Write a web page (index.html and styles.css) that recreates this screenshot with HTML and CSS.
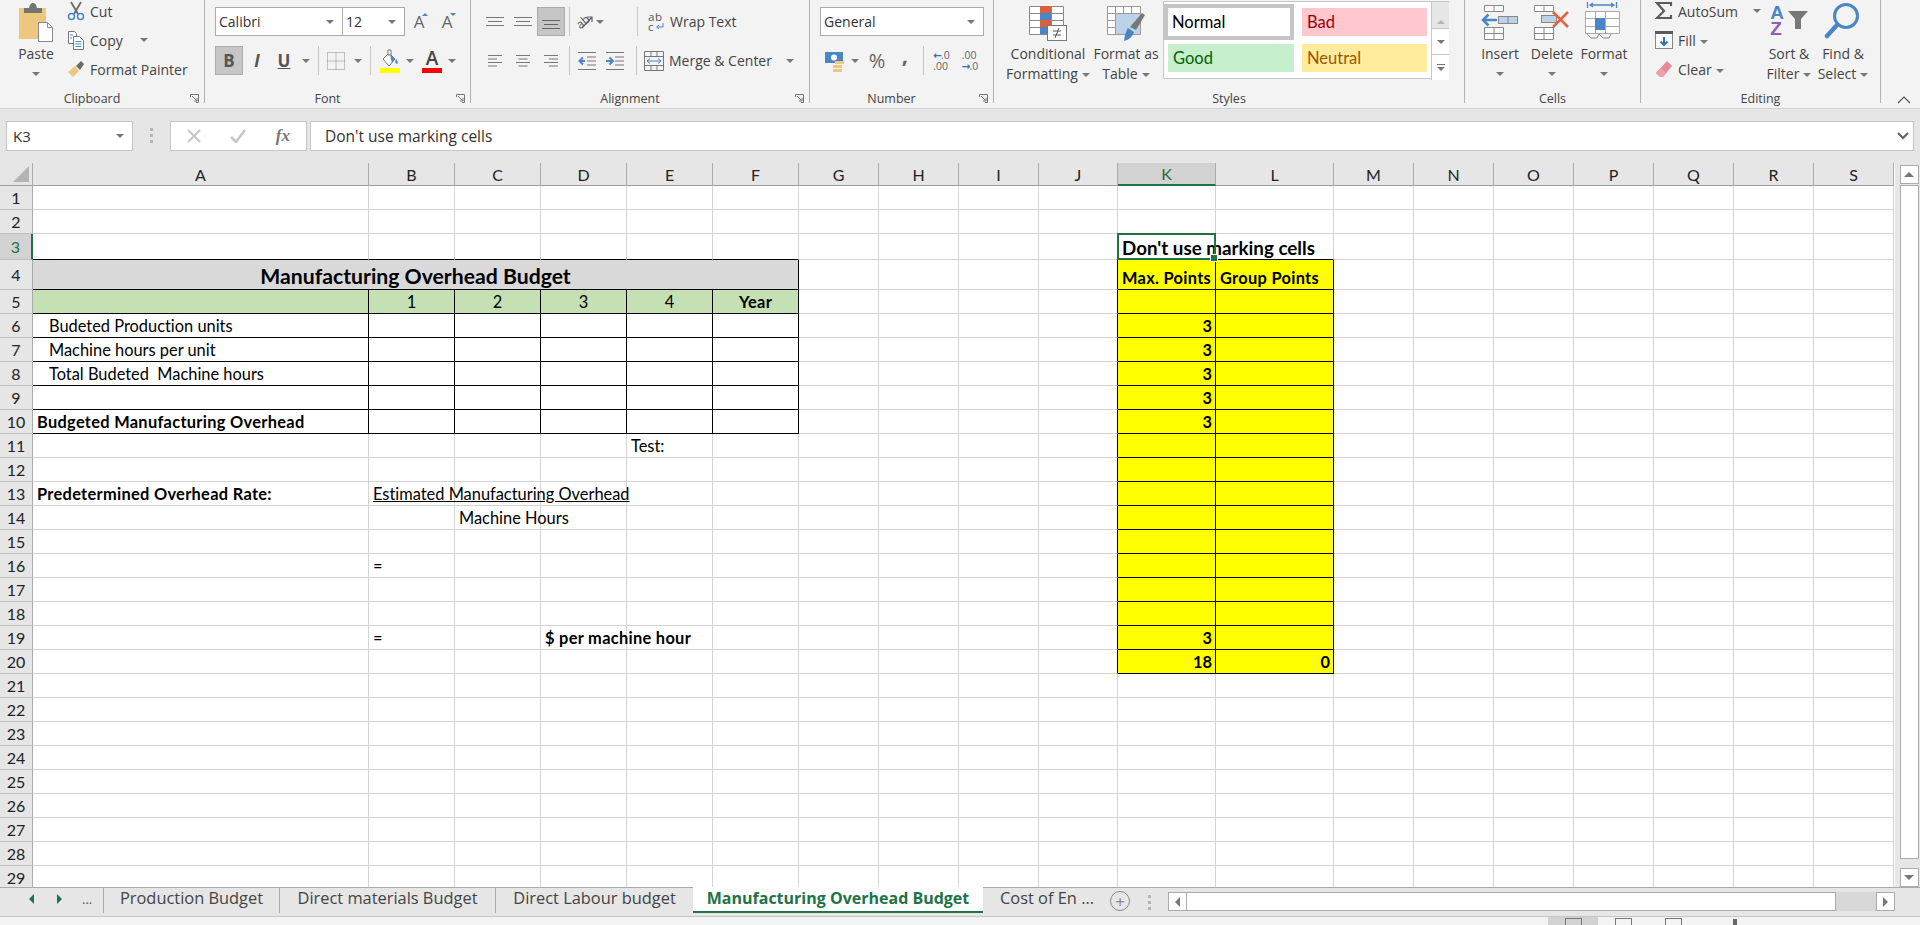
FILE: index.html
```html
<!DOCTYPE html>
<html lang="en">
<head>
    <meta charset="UTF-8">
    <title>Manufacturing Overhead Budget - Excel</title>
    <link rel="stylesheet" href="styles.css">
</head>
<body>

    <!-- Ribbon -->
    <div class="ribbon">

        <div class="group clipboard">
            <div class="body">
                <div class="big paste">
                    <div class="big-icon">
                        <svg width="36" height="40" viewBox="0 0 36 40"><rect x="1" y="6" width="27" height="31" fill="#eec77f"/><path d="M6 11V6h5q1-5 4-5t4 5h5v5z" fill="#737373"/><path d="M20.500 20.500h9l5 5v14h-14z" fill="#fff" stroke="#8a8a8a"/><path d="M29.500 20.500v5h5" fill="none" stroke="#8a8a8a"/></svg>
                    </div>
                    <span>Paste</span>
                    <i class="caret caret-line"></i>
                </div>
                <div class="stack">
                    <div class="stack-row">
                        <svg width="18" height="20" viewBox="0 0 18 20"><path d="M4 1l7 12M14 1L7 13" fill="none" stroke="#6a6a6a" stroke-width="1.800"/><circle cx="4.500" cy="15.500" r="3" fill="none" stroke="#4a86c5" stroke-width="1.500"/><circle cx="13.500" cy="15.500" r="3" fill="none" stroke="#4a86c5" stroke-width="1.500"/></svg>
                        <span>Cut</span>
                    </div>
                    <div class="stack-row">
                        <svg width="18" height="20" viewBox="0 0 18 20"><path d="M1.500 1.500h6l2 2v10h-8z" fill="#fff" stroke="#777"/><path d="M6.500 6.500h6l4 4v9h-10z" fill="#fff" stroke="#777"/><path d="M8.500 11.500h6M8.500 14h6M8.500 16.500h6" stroke="#4a86c5"/><path d="M3 5h3M3 8h2" stroke="#4a86c5"/></svg>
                        <span>Copy</span>
                        <i class="caret copy-caret"></i>
                    </div>
                    <div class="stack-row">
                        <svg width="18" height="18" viewBox="0 0 18 18"><path d="M1 12l7-6 4 5-6 6z" fill="#eec77f"/><path d="M9 6l5-5 3 3-4 6z" fill="#6a6a6a"/></svg>
                        <span>Format Painter</span>
                    </div>
                </div>
            </div>
            <div class="foot"><span class="label">Clipboard</span><svg class="launcher" width="9" height="9" viewBox="0 0 9 9"><path d="M.5 3V.5h8v8H6M2 2l5 5M7 4v3H4" fill="none" stroke="#777"/></svg></div>
        </div>

        <div class="group font">
            <div class="body rows">
                <div class="tools">
                    <div class="combo font-name">Calibri<i class="caret"></i></div>
                    <div class="combo font-size">12<i class="caret"></i></div>
                    <div class="tb w28 grow">A<i class="up"></i></div>
                    <div class="tb w28 grow">A<i class="down"></i></div>
                </div>
                <div class="tools">
                    <div class="tb w28 on"><b>B</b></div>
                    <div class="tb w28 letter"><b><em>I</em></b></div>
                    <div class="tb w26 letter"><b><u>U</u></b></div>
                    <div class="tb w18"><i class="caret"></i></div>
                    <div class="tb w6"><i class="sep"></i></div>
                    <div class="tb w30">
                        <svg width="18" height="18" viewBox="0 0 18 18"><path d="M.5.500h17v17H.5z" fill="none" stroke="#888" stroke-dasharray="1 1"/><path d="M.5 9h17M9 .5v17" stroke="#888" stroke-dasharray="1 1"/></svg>
                    </div>
                    <div class="tb w14"><i class="caret"></i></div>
                    <div class="tb w10"><i class="sep"></i></div>
                    <div class="tb w30">
                        <svg width="20" height="24" viewBox="0 0 20 24"><path d="M3 10l6-6 6 6-6 7z" fill="#fff" stroke="#777"/><path d="M8 1h3v5H8z" fill="#fff" stroke="#777"/><path d="M10 6l5 4-3 4z" fill="#4a86c5"/><path d="M16 10q3 3 1 5-3-1-1-5z" fill="#4a86c5"/><rect y="19" width="20" height="5" fill="#ffff00"/></svg>
                    </div>
                    <div class="tb w10"><i class="caret"></i></div>
                    <div class="tb w34 color-a">
                        <span>A</span><i class="red-bar"></i>
                    </div>
                    <div class="tb w6"><i class="caret"></i></div>
                </div>
            </div>
            <div class="foot"><span class="label">Font</span><svg class="launcher" width="9" height="9" viewBox="0 0 9 9"><path d="M.5 3V.5h8v8H6M2 2l5 5M7 4v3H4" fill="none" stroke="#777"/></svg></div>
        </div>

        <div class="group alignment">
            <div class="body rows">
                <div class="tools">
                    <div class="tb w28"><svg width="18" height="10" viewBox="0 0 18 10"><path d="M0 .5h18M2 4.500h14M0 8.500h18" stroke="#777"/></svg></div>
                    <div class="tb w28"><svg width="18" height="12" viewBox="0 0 18 12"><path d="M0 1.500h18M2 5.500h14M0 9.500h18" stroke="#777"/></svg></div>
                    <div class="tb w28 on"><svg width="18" height="12" viewBox="0 0 18 12" class="low"><path d="M0 1.500h18M2 5.500h14M0 9.500h18" stroke="#666"/></svg></div>
                    <div class="tb w8"><i class="sep"></i></div>
                    <div class="tb w34 orient">
                        <span class="ab-rot">ab</span>
                        <svg class="orient-arrow" width="12" height="14" viewBox="0 0 12 14"><path d="M1 13L11 2M6 2h5v5" fill="none" stroke="#666" stroke-width="1.200"/></svg>
                        <i class="caret"></i>
                    </div>
                    <div class="tb w23"></div>
                    <div class="tb w14"><i class="sep"></i></div>
                    <div class="wide-tool wrap">
                        <span class="ab-icon">
                            <span>ab</span>
                            <span class="c-line">c<svg width="9" height="8" viewBox="0 0 9 8"><path d="M8 0v4H2M4 2L1.500 4 4 6" fill="none" stroke="#4a86c5"/></svg></span>
                        </span>
                        <span>Wrap Text</span>
                    </div>
                </div>
                <div class="tools">
                    <div class="tb w28"><svg width="14" height="12" viewBox="0 0 14 12"><path d="M0 .5h14M0 4h9M0 7.500h14M0 11h9" stroke="#777"/></svg></div>
                    <div class="tb w28"><svg width="14" height="12" viewBox="0 0 14 12"><path d="M0 .5h14M2.500 4h9M0 7.500h14M2.500 11h9" stroke="#777"/></svg></div>
                    <div class="tb w28"><svg width="14" height="12" viewBox="0 0 14 12"><path d="M0 .5h14M5 4h9M0 7.500h14M5 11h9" stroke="#777"/></svg></div>
                    <div class="tb w8"><i class="sep"></i></div>
                    <div class="tb w28"><svg width="18" height="18" viewBox="0 0 18 18"><path d="M0 .5h18M9 5h9M9 9h9M9 13h9M0 17.500h18" stroke="#777"/><path d="M7 9H2M5 5.500L1.500 9 5 12.500" fill="none" stroke="#4a86c5" stroke-width="2"/></svg></div>
                    <div class="tb w28"><svg width="18" height="18" viewBox="0 0 18 18"><path d="M0 .5h18M9 5h9M9 9h9M9 13h9M0 17.500h18" stroke="#777"/><path d="M0 9h6M3.500 5.500L7 9l-3.500 3.500" fill="none" stroke="#4a86c5" stroke-width="2"/></svg></div>
                    <div class="tb w14"><i class="sep"></i></div>
                    <div class="wide-tool merge">
                        <svg width="20" height="20" viewBox="0 0 20 20"><path d="M.5.500h19v19H.5zM.5 5.500h19M.5 14.500h19M7 .5v5M13 .5v5M7 14.500v5M13 14.500v5" fill="none" stroke="#777"/><path d="M3 10h14M6 7.500L3 10l3 2.500M14 7.500l3 2.500-3 2.500" fill="none" stroke="#4a86c5"/></svg>
                        <span>Merge &amp; Center</span>
                        <i class="caret merge-caret"></i>
                    </div>
                </div>
            </div>
            <div class="foot"><span class="label">Alignment</span><svg class="launcher" width="9" height="9" viewBox="0 0 9 9"><path d="M.5 3V.5h8v8H6M2 2l5 5M7 4v3H4" fill="none" stroke="#777"/></svg></div>
        </div>

        <div class="group number">
            <div class="body rows">
                <div class="tools">
                    <div class="combo number-format">General<i class="caret"></i></div>
                </div>
                <div class="tools">
                    <div class="tb w30">
                        <svg width="22" height="22" viewBox="0 0 22 22"><rect x="1" y="2" width="18" height="11" fill="#4a86c5"/><circle cx="10" cy="7.500" r="3" fill="#fff"/><rect x="11" y="11" width="9" height="3" fill="#eec77f"/><rect x="9" y="15" width="9" height="3" fill="#eec77f"/><rect x="9" y="19" width="9" height="3" fill="#eec77f"/></svg>
                    </div>
                    <div class="tb w10"><i class="caret"></i></div>
                    <div class="tb w2"></div>
                    <div class="tb w30 percent">%</div>
                    <div class="tb w26 percent comma">,</div>
                    <div class="tb w10"><i class="sep"></i></div>
                    <div class="tb w27 decimals"><span><em>←</em>.0<br>.00</span></div>
                    <div class="tb w30 decimals"><span>.00<br><em>→</em>.0</span></div>
                </div>
            </div>
            <div class="foot"><span class="label">Number</span><svg class="launcher" width="9" height="9" viewBox="0 0 9 9"><path d="M.5 3V.5h8v8H6M2 2l5 5M7 4v3H4" fill="none" stroke="#777"/></svg></div>
        </div>

        <div class="group styles">
            <div class="body">
                <div class="big cond">
                    <div class="big-icon neq-wrap">
                        <svg width="38" height="36" viewBox="0 0 38 36"><path d="M.5.500h34v28H.5zM.5 7.500h34M.5 14.500h34M.5 21.500h34M11.500.5v28M22.500.5v28" fill="#fff" stroke="#8a8a8a"/><rect x="11" y="0" width="11" height="7" fill="#d9623b"/><rect x="11" y="7" width="11" height="7" fill="#4a86c5"/><rect x="11" y="14" width="11" height="7" fill="#d9623b"/><rect x="11" y="21" width="11" height="7" fill="#4a86c5"/><rect x="18.500" y="19.500" width="19" height="15" fill="#fff" stroke="#777"/><path d="M24 25h8M24 29h8M30 22l-4 10" fill="none" stroke="#555"/></svg>
                    </div>
                    <span>Conditional</span>
                    <span>Formatting<i class="caret inline"></i></span>
                </div>
                <div class="big table-btn">
                    <div class="big-icon">
                        <svg width="38" height="36" viewBox="0 0 38 36"><path d="M.5.500h33v28H.5zM.5 7.500h33M.5 14.500h33M.5 21.500h33M8.500.5v28M16.500.5v28M24.500.5v28" fill="#fff" stroke="#9a9a9a"/><rect x="9" y="8" width="24" height="20" fill="#bcd2e8"/><path d="M23 21L35 7l3 2-9 15z" fill="#777"/><path d="M21 22l6 4q-2 7-10 9 1-9 4-13z" fill="#4a86c5"/></svg>
                    </div>
                    <span>Format as</span>
                    <span>Table<i class="caret inline"></i></span>
                </div>
                <div class="gallery">
                    <div class="style-cell normal">Normal</div>
                    <div class="style-cell bad">Bad</div>
                    <div class="gallery-scroll"><i class="up-grey"></i></div>
                    <div class="style-cell good">Good</div>
                    <div class="style-cell neutral">Neutral</div>
                    <div class="gallery-scroll split">
                        <span class="scroll-part"><i class="caret"></i></span>
                        <span class="scroll-part"><i class="more"></i><i class="caret"></i></span>
                    </div>
                </div>
            </div>
            <div class="foot"><span class="label">Styles</span></div>
        </div>

        <div class="group cells">
            <div class="body">
                <div class="big cell-btn">
                    <div class="big-icon">
                        <svg width="38" height="36" viewBox="0 0 38 36"><path d="M3.500 1.500h19v6h-19zM13 1.500v6M3.500 23.500h19v12h-19zM13 23.500v12M3.500 29.500h19" fill="#fff" stroke="#888"/><rect x="17.500" y="12.500" width="19" height="7" fill="#bcd2e8" stroke="#888"/><path d="M27 12.500v7" stroke="#888"/><path d="M16 16H2M7.500 10.500L2 16l5.500 5.500" fill="none" stroke="#4a86c5" stroke-width="2.500"/></svg>
                    </div>
                    <span>Insert</span>
                    <i class="caret caret-line"></i>
                </div>
                <div class="big cell-btn">
                    <div class="big-icon">
                        <svg width="38" height="36" viewBox="0 0 38 36"><path d="M1.500 1.500h19v6h-19zM11 1.500v6M1.500 23.500h19v12h-19zM11 23.500v12M1.500 29.500h19" fill="#fff" stroke="#888"/><rect x="8.500" y="11.500" width="15" height="7" fill="#bcd2e8" stroke="#888"/><path d="M20 8l15 15M35 8L20 23" stroke="#e2633c" stroke-width="2.500"/></svg>
                    </div>
                    <span>Delete</span>
                    <i class="caret caret-line"></i>
                </div>
                <div class="big cell-btn">
                    <div class="big-icon">
                        <svg width="38" height="38" viewBox="0 0 38 38" class="format-icon"><path d="M2.500 0v6M31.500 0v6M5 3h24M8 1L5 3l3 2M26 1l3 2-3 2" fill="none" stroke="#4a86c5" stroke-width="1.300"/><path d="M.5 9.500h34v22H.5zM10.500 9.500v22M20.500 9.500v22M.5 16.500h34M.5 24.500h34" fill="#fff" stroke="#aaa"/><rect x="10" y="16" width="10" height="12" fill="#4a86c5"/><path d="M2 32l4 4h6l2-4M14 32l4 4h6l2-4" fill="none" stroke="#888"/></svg>
                    </div>
                    <span>Format</span>
                    <i class="caret caret-line"></i>
                </div>
            </div>
            <div class="foot"><span class="label">Cells</span></div>
        </div>

        <div class="group editing">
            <div class="body">
                <div class="stack edit-stack">
                    <div class="stack-row">
                        <svg width="18" height="18" viewBox="0 0 18 18"><path d="M16 4V1H2l7 8-7 7h14v-3" fill="none" stroke="#5a5a5a" stroke-width="2.200"/></svg>
                        <span>AutoSum</span>
                        <i class="caret sum-caret"></i>
                    </div>
                    <div class="stack-row">
                        <svg width="18" height="18" viewBox="0 0 18 18"><rect x=".5" y=".5" width="17" height="17" fill="#fff" stroke="#888"/><rect width="18" height="3" fill="#5a5a5a"/><path d="M9 6v8M5.500 10.500L9 14l3.500-3.500" fill="none" stroke="#2f75b5" stroke-width="2"/></svg>
                        <span>Fill<i class="caret inline"></i></span>
                    </div>
                    <div class="stack-row">
                        <svg width="18" height="18" viewBox="0 0 18 18"><path d="M12 1l5 5-9 11H5l-4-4z" fill="#e8899a"/><path d="M1 13l5-5 5 5-3 4H5z" fill="#ee9fae"/></svg>
                        <span>Clear<i class="caret inline"></i></span>
                    </div>
                </div>
                <div class="big sort">
                    <div class="big-icon sort-icon">
                        <span class="az"><span class="az-a">A</span><span class="az-z">Z</span></span>
                        <svg width="20" height="19" viewBox="0 0 20 19"><path d="M0 0h20l-7 8v10H7V8z" fill="#777"/></svg>
                    </div>
                    <span>Sort &amp;</span>
                    <span>Filter<i class="caret inline"></i></span>
                </div>
                <div class="big find">
                    <div class="big-icon">
                        <svg width="38" height="38" viewBox="0 0 38 38"><circle cx="22" cy="14" r="11.500" fill="none" stroke="#4a86c5" stroke-width="3"/><path d="M13 23L3 34" stroke="#4a86c5" stroke-width="4.500" stroke-linecap="round"/></svg>
                    </div>
                    <span>Find &amp;</span>
                    <span>Select<i class="caret inline"></i></span>
                </div>
            </div>
            <div class="foot"><span class="label">Editing</span></div>
        </div>

        <div class="collapse">
            <svg width="14" height="8" viewBox="0 0 14 8"><path d="M1 7l6-6 6 6" fill="none" stroke="#555" stroke-width="1.200"/></svg>
        </div>
    </div>

    <!-- Formula bar -->
    <div class="formula-bar">
        <div class="name-box">K3<i class="caret"></i></div>
        <div class="grip"><i></i><i></i><i></i></div>
        <div class="fx-buttons">
            <svg width="14" height="14" viewBox="0 0 14 14"><path d="M1 1l12 12M13 1L1 13" stroke="#c6c6c6" stroke-width="2"/></svg>
            <svg width="16" height="14" viewBox="0 0 16 14"><path d="M1 8l5 5 9-12" fill="none" stroke="#c6c6c6" stroke-width="2.500"/></svg>
            <span class="fx">fx</span>
        </div>
        <div class="formula-input">
            <span>Don't use marking cells</span>
            <svg width="12" height="8" viewBox="0 0 12 8"><path d="M1 1l5 5 5-5" fill="none" stroke="#666" stroke-width="2.200"/></svg>
        </div>
    </div>

    <!-- Sheet -->
    <div class="sheet-area">
        <div class="sheet">
            <table>
                <colgroup>
                    <col class="c-head"><col class="c-a">
                    <col class="c-86"><col class="c-86"><col class="c-86"><col class="c-86"><col class="c-86">
                    <col class="c-80"><col class="c-80"><col class="c-80"><col class="c-79">
                    <col class="c-k"><col class="c-l">
                    <col class="c-80"><col class="c-80"><col class="c-80"><col class="c-80"><col class="c-80"><col class="c-80"><col class="c-80">
                </colgroup>
                <tr class="heads">
                    <th class="corner"><svg width="16" height="16" viewBox="0 0 16 16"><path d="M16 0v16H0z" fill="#b4b4b4"/></svg></th>
                    <th>A</th><th>B</th><th>C</th><th>D</th><th>E</th><th>F</th><th>G</th><th>H</th><th>I</th><th>J</th><th class="active-col">K</th><th>L</th><th>M</th><th>N</th><th>O</th><th>P</th><th>Q</th><th>R</th><th>S</th>
                </tr>
                <tr><th>1</th><td></td><td></td><td></td><td></td><td></td><td></td><td></td><td></td><td></td><td></td><td></td><td></td><td></td><td></td><td></td><td></td><td></td><td></td><td></td></tr>
                <tr><th>2</th><td></td><td></td><td></td><td></td><td></td><td></td><td></td><td></td><td></td><td></td><td></td><td></td><td></td><td></td><td></td><td></td><td></td><td></td><td></td></tr>
                <tr class="row-3"><th class="active-row">3</th><td class="over"></td><td class="over"></td><td class="over"></td><td class="over"></td><td class="over"></td><td class="over"></td><td></td><td></td><td></td><td></td><td class="selected over note">Don't use marking cells</td><td class="over"></td><td></td><td></td><td></td><td></td><td></td><td></td><td></td></tr>
                <tr class="row-4"><th>4</th><td class="box title" colspan="6">Manufacturing Overhead Budget</td><td></td><td></td><td></td><td class="left-of"></td><td class="yellow head-cell">Max. Points</td><td class="yellow head-cell">Group Points</td><td></td><td></td><td></td><td></td><td></td><td></td><td></td></tr>
                <tr><th>5</th><td class="box green"></td><td class="box green center">1</td><td class="box green center">2</td><td class="box green center">3</td><td class="box green center">4</td><td class="box green center bold">Year</td><td></td><td></td><td></td><td class="left-of"></td><td class="yellow"></td><td class="yellow"></td><td></td><td></td><td></td><td></td><td></td><td></td><td></td></tr>
                <tr><th>6</th><td class="box indent">Budeted Production units</td><td class="box"></td><td class="box"></td><td class="box"></td><td class="box"></td><td class="box"></td><td></td><td></td><td></td><td class="left-of"></td><td class="yellow num">3</td><td class="yellow"></td><td></td><td></td><td></td><td></td><td></td><td></td><td></td></tr>
                <tr><th>7</th><td class="box indent">Machine hours per unit</td><td class="box"></td><td class="box"></td><td class="box"></td><td class="box"></td><td class="box"></td><td></td><td></td><td></td><td class="left-of"></td><td class="yellow num">3</td><td class="yellow"></td><td></td><td></td><td></td><td></td><td></td><td></td><td></td></tr>
                <tr><th>8</th><td class="box indent">Total Budeted&nbsp; Machine hours</td><td class="box"></td><td class="box"></td><td class="box"></td><td class="box"></td><td class="box"></td><td></td><td></td><td></td><td class="left-of"></td><td class="yellow num">3</td><td class="yellow"></td><td></td><td></td><td></td><td></td><td></td><td></td><td></td></tr>
                <tr><th>9</th><td class="box"></td><td class="box"></td><td class="box"></td><td class="box"></td><td class="box"></td><td class="box"></td><td></td><td></td><td></td><td class="left-of"></td><td class="yellow num">3</td><td class="yellow"></td><td></td><td></td><td></td><td></td><td></td><td></td><td></td></tr>
                <tr><th>10</th><td class="box bold">Budgeted Manufacturing Overhead</td><td class="box"></td><td class="box"></td><td class="box"></td><td class="box"></td><td class="box"></td><td></td><td></td><td></td><td class="left-of"></td><td class="yellow num">3</td><td class="yellow"></td><td></td><td></td><td></td><td></td><td></td><td></td><td></td></tr>
                <tr><th>11</th><td></td><td></td><td></td><td></td><td>Test:</td><td></td><td></td><td></td><td></td><td class="left-of"></td><td class="yellow"></td><td class="yellow"></td><td></td><td></td><td></td><td></td><td></td><td></td><td></td></tr>
                <tr><th>12</th><td></td><td></td><td></td><td></td><td></td><td></td><td></td><td></td><td></td><td class="left-of"></td><td class="yellow"></td><td class="yellow"></td><td></td><td></td><td></td><td></td><td></td><td></td><td></td></tr>
                <tr><th>13</th><td class="bold">Predetermined Overhead Rate:</td><td class="underline">Estimated Manufacturing Overhead</td><td></td><td></td><td></td><td></td><td></td><td></td><td></td><td class="left-of"></td><td class="yellow"></td><td class="yellow"></td><td></td><td></td><td></td><td></td><td></td><td></td><td></td></tr>
                <tr><th>14</th><td></td><td></td><td>Machine Hours</td><td></td><td></td><td></td><td></td><td></td><td></td><td class="left-of"></td><td class="yellow"></td><td class="yellow"></td><td></td><td></td><td></td><td></td><td></td><td></td><td></td></tr>
                <tr><th>15</th><td></td><td></td><td></td><td></td><td></td><td></td><td></td><td></td><td></td><td class="left-of"></td><td class="yellow"></td><td class="yellow"></td><td></td><td></td><td></td><td></td><td></td><td></td><td></td></tr>
                <tr><th>16</th><td></td><td>=</td><td></td><td></td><td></td><td></td><td></td><td></td><td></td><td class="left-of"></td><td class="yellow"></td><td class="yellow"></td><td></td><td></td><td></td><td></td><td></td><td></td><td></td></tr>
                <tr><th>17</th><td></td><td></td><td></td><td></td><td></td><td></td><td></td><td></td><td></td><td class="left-of"></td><td class="yellow"></td><td class="yellow"></td><td></td><td></td><td></td><td></td><td></td><td></td><td></td></tr>
                <tr><th>18</th><td></td><td></td><td></td><td></td><td></td><td></td><td></td><td></td><td></td><td class="left-of"></td><td class="yellow"></td><td class="yellow"></td><td></td><td></td><td></td><td></td><td></td><td></td><td></td></tr>
                <tr><th>19</th><td></td><td>=</td><td></td><td class="bold">$ per machine hour</td><td></td><td></td><td></td><td></td><td></td><td class="left-of"></td><td class="yellow num">3</td><td class="yellow"></td><td></td><td></td><td></td><td></td><td></td><td></td><td></td></tr>
                <tr><th>20</th><td></td><td></td><td></td><td></td><td></td><td></td><td></td><td></td><td></td><td class="left-of"></td><td class="yellow num">18</td><td class="yellow num">0</td><td></td><td></td><td></td><td></td><td></td><td></td><td></td></tr>
                <tr><th>21</th><td></td><td></td><td></td><td></td><td></td><td></td><td></td><td></td><td></td><td></td><td></td><td></td><td></td><td></td><td></td><td></td><td></td><td></td><td></td></tr>
                <tr><th>22</th><td></td><td></td><td></td><td></td><td></td><td></td><td></td><td></td><td></td><td></td><td></td><td></td><td></td><td></td><td></td><td></td><td></td><td></td><td></td></tr>
                <tr><th>23</th><td></td><td></td><td></td><td></td><td></td><td></td><td></td><td></td><td></td><td></td><td></td><td></td><td></td><td></td><td></td><td></td><td></td><td></td><td></td></tr>
                <tr><th>24</th><td></td><td></td><td></td><td></td><td></td><td></td><td></td><td></td><td></td><td></td><td></td><td></td><td></td><td></td><td></td><td></td><td></td><td></td><td></td></tr>
                <tr><th>25</th><td></td><td></td><td></td><td></td><td></td><td></td><td></td><td></td><td></td><td></td><td></td><td></td><td></td><td></td><td></td><td></td><td></td><td></td><td></td></tr>
                <tr><th>26</th><td></td><td></td><td></td><td></td><td></td><td></td><td></td><td></td><td></td><td></td><td></td><td></td><td></td><td></td><td></td><td></td><td></td><td></td><td></td></tr>
                <tr><th>27</th><td></td><td></td><td></td><td></td><td></td><td></td><td></td><td></td><td></td><td></td><td></td><td></td><td></td><td></td><td></td><td></td><td></td><td></td><td></td></tr>
                <tr><th>28</th><td></td><td></td><td></td><td></td><td></td><td></td><td></td><td></td><td></td><td></td><td></td><td></td><td></td><td></td><td></td><td></td><td></td><td></td><td></td></tr>
                <tr><th>29</th><td></td><td></td><td></td><td></td><td></td><td></td><td></td><td></td><td></td><td></td><td></td><td></td><td></td><td></td><td></td><td></td><td></td><td></td><td></td></tr>
            </table>
        </div>
        <div class="vscroll">
            <div class="scroll-btn"><i class="up-grey dark"></i></div>
            <div class="vthumb"></div>
            <div class="scroll-btn"><i class="down-grey"></i></div>
        </div>
    </div>

    <!-- Sheet tabs -->
    <div class="tab-bar">
        <div class="tab-nav">
            <i class="nav-left"></i>
            <i class="nav-right"></i>
            <span>...</span>
        </div>
        <div class="tabs">
            <div class="tab">Production Budget</div>
            <div class="tab">Direct materials Budget</div>
            <div class="tab">Direct Labour budget</div>
            <div class="tab active">Manufacturing Overhead Budget</div>
            <div class="tab more-tab">Cost of En ...</div>
        </div>
        <div class="add-sheet">+</div>
        <div class="grip tab-grip"><i></i><i></i><i></i></div>
        <div class="hscroll">
            <div class="scroll-btn"><i class="left-grey"></i></div>
            <div class="hthumb"></div>
            <div class="scroll-btn"><i class="right-grey"></i></div>
        </div>
    </div>

    <!-- Status bar -->
    <div class="status-bar">
        <div class="view on"><i></i></div>
        <div class="view"><i></i></div>
        <div class="view"><i></i></div>
        <div class="zoom-line"><i></i></div>
    </div>

</body>
</html>
```

FILE: styles.css
```css
* {
    box-sizing: border-box;
}

html, body {
    margin: 0;
    height: 100%;
}

body {
    font-family: 'Open Sans', sans-serif;
    font-size: 14px;
    color: #444;
    background: #f3f3f3;
    display: flex;
    flex-direction: column;
    height: 925px;
    overflow: hidden;
}

i {
    display: block;
}

/* Ribbon */
.ribbon {
    display: flex;
    flex: 0 0 109px;
    background: #f3f3f3;
    border-bottom: 1px solid #d2d2d2;
}

.group {
    display: flex;
    flex-direction: column;
    height: 103px;
    border-right: 1px solid #b1b1b1;
}

.clipboard { width: 205px; }
.font { width: 266px; }
.alignment { width: 339px; }
.number { width: 184px; }
.styles { width: 471px; }
.cells { width: 176px; }
.editing { width: 240px; }

.body {
    display: flex;
    height: 88px;
}

.rows {
    flex-direction: column;
    padding: 7px 0 0 10px;
    gap: 10px;
}

.foot {
    display: flex;
    align-items: center;
    height: 15px;
    padding-top: 5px;
}

.label {
    flex: 1;
    text-align: center;
    font-size: 12.500px;
    margin-right: 20px;
}

.styles .label, .cells .label, .editing .label {
    margin-right: 0;
}

.launcher {
    margin-right: 5px;
    margin-left: -14px;
}

.caret {
    width: 0;
    height: 0;
    border-left: 4px solid transparent;
    border-right: 4px solid transparent;
    border-top: 4px solid #777;
    flex: none;
}

.caret.inline {
    display: inline-block;
    margin-left: 4px;
    vertical-align: middle;
}

.caret-line {
    margin-top: 8px;
}

.big {
    display: flex;
    flex-direction: column;
    align-items: center;
    line-height: 20px;
    white-space: nowrap;
}

.big-icon {
    height: 44px;
    padding-top: 4px;
}

.paste {
    width: 44px;
    margin-left: 14px;
}

.paste .big-icon {
    padding-top: 2px;
}

.stack {
    display: grid;
    grid-template-rows: 24px 34px 24px;
    margin: -1px 0 0 9px;
}

.stack-row {
    display: flex;
    align-items: center;
    gap: 5px;
    white-space: nowrap;
}

.copy-caret {
    margin-left: 12px;
}

.tools {
    display: flex;
    align-items: center;
    height: 29px;
}

.combo {
    display: flex;
    align-items: center;
    justify-content: space-between;
    height: 29px;
    background: #fff;
    border: 1px solid #ababab;
    padding: 0 8px 0 3px;
    color: #333;
}

.font-name { width: 128px; }
.font-size { width: 62px; border-left: 0; }
.number-format { width: 164px; }

.tb {
    display: flex;
    align-items: center;
    justify-content: center;
    height: 29px;
    flex: none;
    color: #555;
}

.tb.on {
    background: #c6c6c6;
    border: 1px solid #ababab;
}

.low { margin-top: 7px; }

.w2 { width: 2px; }
.w6 { width: 6px; }
.w8 { width: 8px; }
.w10 { width: 10px; }
.w14 { width: 14px; }
.w18 { width: 18px; }
.w23 { width: 23px; }
.w26 { width: 26px; }
.w27 { width: 27px; }
.w28 { width: 28px; }
.w30 { width: 30px; }
.w34 { width: 34px; }

.sep {
    width: 1px;
    height: 29px;
    background: #c6c6c6;
}

.tb b {
    font-size: 17px;
}

.letter b em {
    font-style: italic;
}

.grow {
    position: relative;
    font-size: 17px;
    color: #666;
}

.up, .down {
    position: absolute;
    top: 6px;
    right: 5px;
    width: 0;
    height: 0;
    border-left: 3px solid transparent;
    border-right: 3px solid transparent;
}

.up { border-bottom: 3px solid #4a86c5; }
.down { border-top: 3px solid #4a86c5; }

.color-a {
    flex-direction: column;
}

.color-a span {
    font-size: 19px;
    font-weight: 600;
    line-height: 18px;
    color: #444;
}

.red-bar {
    width: 20px;
    height: 5px;
    background: #f00;
    margin-top: 1px;
}

.orient {
    gap: 0;
}

.ab-rot {
    display: block;
    font-size: 12px;
    line-height: 12px;
    color: #555;
    transform: rotate(-40deg);
    margin-right: -9px;
}

.orient-arrow {
    margin-right: 3px;
}

.wide-tool {
    display: flex;
    align-items: center;
    gap: 5px;
    white-space: nowrap;
}

.wrap { margin-left: 4px; }
.merge { margin-left: 1px; }

.ab-icon {
    display: flex;
    flex-direction: column;
    width: 17px;
    font-size: 11.500px;
    line-height: 10px;
    letter-spacing: 0.500px;
    color: #555;
}

.c-line {
    display: flex;
    align-items: center;
    gap: 1px;
}

.merge-caret {
    margin-left: 9px;
}

.percent {
    font-size: 20px;
    color: #666;
}

.comma {
    font-size: 22px;
    font-weight: 700;
    padding-bottom: 14px;
}

.decimals {
    font-size: 10.500px;
    line-height: 11px;
    color: #666;
    white-space: nowrap;
}

.decimals em {
    font-style: normal;
    font-weight: 700;
    color: #2f75b5;
    font-family: 'DejaVu Sans', sans-serif;
    letter-spacing: -1px;
}

.cond {
    width: 76px;
    margin-left: 16px;
}

.table-btn {
    width: 74px;
    margin-left: 3px;
}

.styles .big-icon { padding-top: 6px; }

/* style gallery */
.gallery {
    display: grid;
    grid-template-columns: 134px 133px 18px;
    grid-template-rows: 40px 38px;
    width: 286px;
    height: 78px;
    margin-top: 1px;
    background: #fff;
    border: 1px solid #c6c6c6;
}

.style-cell {
    display: flex;
    align-items: center;
    padding-left: 5px;
    font-family: 'Lato', sans-serif;
    font-size: 16.500px;
}

.normal {
    background: #fff;
    color: #000;
    border: 4px solid #c6c6c6;
    margin: 2px 4px 2px 0;
    padding-left: 4px;
}

.bad {
    background: #ffc7ce;
    color: #9c0006;
    margin: 6px 22px 6px 4px;
    width: 125px;
}

.good {
    background: #c6efce;
    color: #006100;
    margin: 2px 4px 8px 4px;
}

.neutral {
    background: #ffeb9c;
    color: #9c5700;
    margin: 2px 0 8px 4px;
    width: 125px;
}

.gallery-scroll {
    display: flex;
    align-items: center;
    justify-content: center;
    background: #e6e6e6;
    border-left: 1px solid #c6c6c6;
}

.gallery-scroll.split {
    flex-direction: column;
    background: #fff;
    margin-top: -14px;
}

.scroll-part {
    display: flex;
    flex-direction: column;
    align-items: center;
    justify-content: center;
    gap: 2px;
    flex: 1;
    width: 100%;
    border-top: 1px solid #c6c6c6;
}

.more {
    width: 8px;
    height: 1px;
    background: #777;
}

.up-grey, .down-grey, .left-grey, .right-grey {
    width: 0;
    height: 0;
}

.up-grey {
    border-left: 4px solid transparent;
    border-right: 4px solid transparent;
    border-bottom: 4px solid #b5b5b5;
}

.up-grey.dark {
    border-left-width: 5px;
    border-right-width: 5px;
    border-bottom: 5px solid #777;
}

.down-grey {
    border-left: 5px solid transparent;
    border-right: 5px solid transparent;
    border-top: 5px solid #777;
}

.left-grey {
    border-top: 5px solid transparent;
    border-bottom: 5px solid transparent;
    border-right: 5px solid #777;
}

.right-grey {
    border-top: 5px solid transparent;
    border-bottom: 5px solid transparent;
    border-left: 5px solid #777;
}

.cell-btn {
    width: 52px;
}

.cell-btn:first-child {
    margin-left: 9px;
}

.format-icon {
    margin-top: -2px;
}

.edit-stack {
    width: 107px;
    margin: -1px 0 0 14px;
}

.sum-caret {
    margin-left: 10px;
}

.sort, .find {
    width: 54px;
}

.sort-icon {
    display: flex;
    align-items: flex-start;
    gap: 4px;
    padding-top: 5px;
}

.az {
    display: flex;
    flex-direction: column;
    font-family: 'Liberation Sans', sans-serif;
    font-size: 19px;
    font-weight: 700;
    line-height: 16px;
}

.az-a { color: #4a86c5; }
.az-z { color: #8c5fb5; }

.sort-icon svg {
    margin-top: 6px;
}

.find .big-icon { padding-top: 2px; }

.collapse {
    flex: 1;
    display: flex;
    justify-content: center;
    align-items: flex-end;
    padding: 0 0 4px 6px;
}

/* Formula bar */
.formula-bar {
    display: flex;
    align-items: center;
    flex: 0 0 54px;
    padding: 0 6px 1px 6px;
    background: #e6e6e6;
}

.name-box {
    display: flex;
    align-items: center;
    justify-content: space-between;
    width: 127px;
    height: 30px;
    padding: 0 8px 0 6px;
    background: #fff;
    border: 1px solid #c6c6c6;
    font-size: 15px;
    color: #333;
}

.grip {
    display: flex;
    flex-direction: column;
    gap: 3px;
    width: 37px;
    align-items: center;
}

.grip i {
    width: 3px;
    height: 3px;
    background: #b5b5b5;
}

.fx-buttons {
    display: flex;
    align-items: center;
    justify-content: space-between;
    width: 137px;
    height: 30px;
    padding: 0 16px;
    background: #fff;
    border: 1px solid #c6c6c6;
}

.fx {
    font-family: 'Liberation Serif', serif;
    font-style: italic;
    font-weight: 700;
    font-size: 17px;
    color: #777;
}

.formula-input {
    display: flex;
    align-items: center;
    justify-content: space-between;
    flex: 1;
    height: 30px;
    margin-left: 3px;
    padding: 0 4px 0 14px;
    background: #fff;
    border: 1px solid #c6c6c6;
    font-size: 15.500px;
    color: #333;
}

/* Sheet */
.sheet-area {
    display: flex;
    flex: 0 0 724px;
    background: #e6e6e6;
}

.sheet {
    width: 1895px;
    height: 724px;
    overflow: hidden;
    background: #fff;
}

table {
    table-layout: fixed;
    border-collapse: separate;
    border-spacing: 0;
    width: 1894px;
    font-family: 'Lato', sans-serif;
    font-size: 16.400px;
    font-variant-ligatures: none;
    color: #000;
}

.c-head { width: 33px; }
.c-a { width: 336px; }
.c-86 { width: 86px; }
.c-80 { width: 80px; }
.c-79 { width: 79px; }
.c-k { width: 98px; }
.c-l { width: 118px; }

tr {
    height: 24px;
}

.heads { height: 23px; }
.row-3 { height: 26px; }
.row-4 { height: 30px; }

th {
    padding: 0;
    font-weight: 400;
    font-size: 16px;
    background: #e6e6e6;
    color: #222;
    border-right: 1px solid #ababab;
    border-bottom: 1px solid #c0c0c0;
}

.heads th {
    border-bottom: 1px solid #9f9f9f;
}

td {
    padding: 1px 4px 0;
    white-space: nowrap;
    line-height: 20px;
    border-right: 1px solid #d4d4d4;
    border-bottom: 1px solid #d4d4d4;
}

.corner {
    text-align: right;
    padding-right: 3px;
    line-height: 0;
}

.heads .active-col {
    background: #d2d2d2;
    color: #1f6e43;
    border-bottom: 2px solid #217346;
}

.active-row {
    background: #d2d2d2;
    color: #1f6e43;
    border-right: 2px solid #217346;
}

.over { border-bottom-color: #000; }
.left-of { border-right-color: #000; }

.box {
    border-right-color: #000;
    border-bottom-color: #000;
}

.title {
    background: #d9d9d9;
    text-align: center;
    font-size: 21.200px;
    font-weight: 700;
    padding-top: 2px;
}

.green { background: #c5e0b3; }
.center { text-align: center; }

.bold {
    font-weight: 700;
    letter-spacing: 0.300px;
}

.indent { padding-left: 16px; }
.underline { text-decoration: underline; }

.yellow {
    background: #ff0;
    border-right-color: #000;
    border-bottom-color: #000;
}

.head-cell {
    font-weight: 700;
    letter-spacing: 0.300px;
    padding-top: 6px;
}

.num {
    text-align: right;
    font-weight: 700;
    padding-right: 3px;
}

.note {
    font-size: 18.800px;
    font-weight: 700;
    padding-top: 2px;
}

.selected {
    position: relative;
}

.selected::after {
    content: "";
    position: absolute;
    inset: -1px -1px -1px -1px;
    border: 2px solid #217346;
}

.selected::before {
    content: "";
    position: absolute;
    right: -3px;
    bottom: -3px;
    width: 6px;
    height: 6px;
    background: #217346;
    border: 1px solid #fff;
    z-index: 1;
}

.vscroll {
    display: flex;
    flex-direction: column;
    align-items: center;
    width: 25px;
    padding: 2px 0 0 3px;
    background: #e6e6e6;
}

.scroll-btn {
    display: flex;
    align-items: center;
    justify-content: center;
    flex: none;
    width: 19px;
    height: 19px;
    background: #fff;
    border: 1px solid #ababab;
}

.vthumb {
    width: 19px;
    height: 674px;
    margin: 1px 0 0 0;
    background: #fff;
    border: 1px solid #ababab;
}

.vscroll .scroll-btn:last-child {
    margin-top: auto;
}

/* Sheet tabs */
.tab-bar {
    display: flex;
    align-items: flex-start;
    flex: 0 0 30px;
    background: #e6e6e6;
    border-top: 1px solid #ababab;
    border-bottom: 1px solid #c6c6c6;
}

.tab-nav {
    display: flex;
    align-items: center;
    width: 103px;
    height: 22px;
    padding-left: 29px;
    color: #555;
}

.nav-left, .nav-right {
    width: 0;
    height: 0;
    border-top: 5px solid transparent;
    border-bottom: 5px solid transparent;
}

.nav-left { border-right: 5px solid #217346; }
.nav-right { border-left: 5px solid #217346; margin-left: 23px; }

.tab-nav span {
    margin-left: 20px;
    font-size: 13px;
}

.tabs {
    display: grid;
    grid-template-columns: 176px 216px 198px 290px 117px;
    margin-top: -1px;
}

.tab {
    display: flex;
    align-items: center;
    justify-content: center;
    height: 26px;
    padding-bottom: 5px;
    font-size: 16.400px;
    color: #444;
    border-left: 1px solid #ababab;
    white-space: nowrap;
}

.tab.active {
    border-left: 0;
    background: #fff;
    color: #217346;
    font-size: 16px;
    font-weight: 700;
    border-bottom: 2px solid #217346;
    padding-bottom: 3px;
}

.tab.more-tab {
    border-left: 0;
    justify-content: flex-start;
    padding-left: 17px;
}

.add-sheet {
    display: flex;
    align-items: center;
    justify-content: center;
    width: 20px;
    height: 20px;
    margin: 3px 0 0 10px;
    border: 1px solid #8a8a8a;
    border-radius: 50%;
    color: #8a8a8a;
    font-size: 17px;
    line-height: 1;
}

.tab-grip {
    width: 38px;
    margin-top: 7px;
}

.hscroll {
    display: flex;
    margin-top: 4px;
    background: #d8d8d8;
}

.hthumb {
    width: 649px;
    height: 19px;
    background: #fff;
    border: 1px solid #ababab;
    border-left: 0;
    margin-right: 40px;
}

/* Status bar */
.status-bar {
    display: flex;
    flex: 1;
    padding-left: 1548px;
    background: #f3f3f3;
    overflow: hidden;
}

.view {
    display: flex;
    justify-content: center;
    width: 50px;
    padding-top: 1px;
}

.view.on {
    background: #d2d2d2;
}

.view i {
    width: 17px;
    height: 12px;
    border: 1px solid #777;
}

.zoom-line {
    margin-left: 35px;
}

.zoom-line i {
    width: 4px;
    height: 8px;
    background: #666;
    margin-top: 2px;
}
```
